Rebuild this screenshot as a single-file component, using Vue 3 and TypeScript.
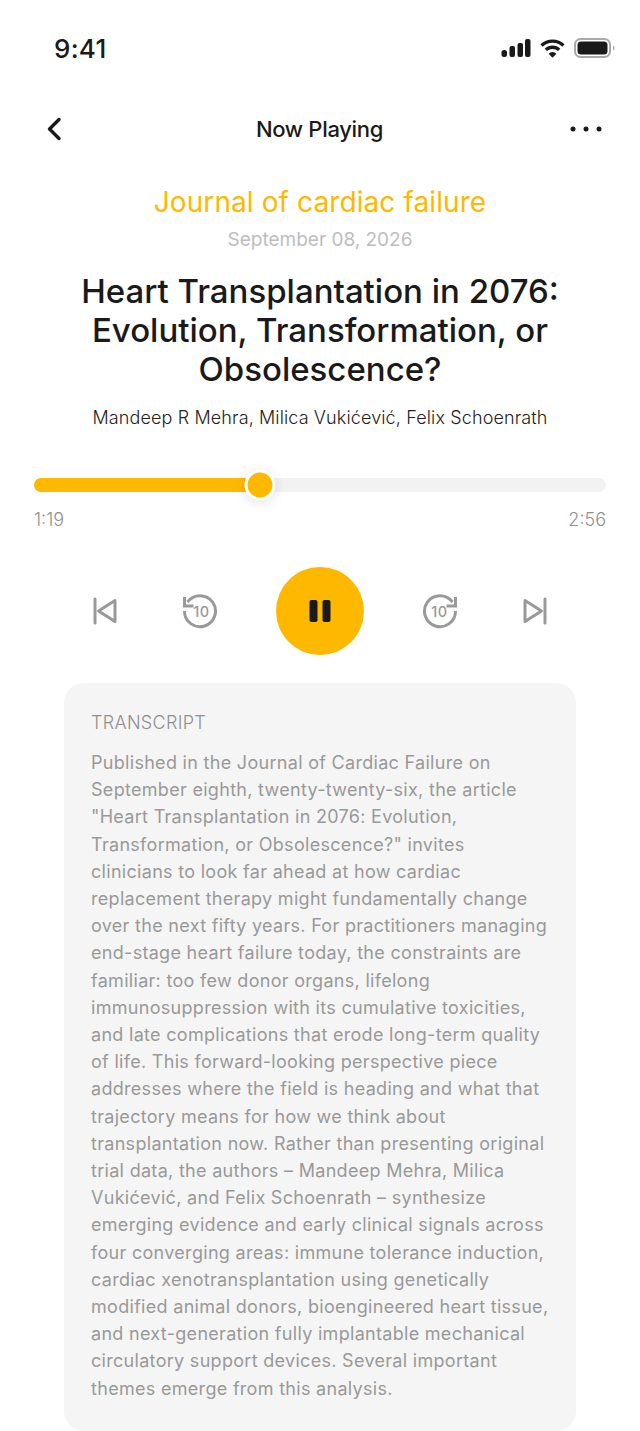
<script setup lang="ts">
const title = 'Heart Transplantation in 2076: Evolution, Transformation, or Obsolescence?'
const progress = 226 / 572
const lines = [
  'Published in the Journal of Cardiac Failure on',
  'September eighth, twenty-twenty-six, the article',
  '"Heart Transplantation in 2076: Evolution,',
  'Transformation, or Obsolescence?" invites',
  'clinicians to look far ahead at how cardiac',
  'replacement therapy might fundamentally change',
  'over the next fifty years. For practitioners managing',
  'end-stage heart failure today, the constraints are',
  'familiar: too few donor organs, lifelong',
  'immunosuppression with its cumulative toxicities,',
  'and late complications that erode long-term quality',
  'of life. This forward-looking perspective piece',
  'addresses where the field is heading and what that',
  'trajectory means for how we think about',
  'transplantation now. Rather than presenting original',
  'trial data, the authors – Mandeep Mehra, Milica',
  'Vukićević, and Felix Schoenrath – synthesize',
  'emerging evidence and early clinical signals across',
  'four converging areas: immune tolerance induction,',
  'cardiac xenotransplantation using genetically',
  'modified animal donors, bioengineered heart tissue,',
  'and next-generation fully implantable mechanical',
  'circulatory support devices. Several important',
  'themes emerge from this analysis.',
]
</script>

<template>
  <div class="screen">
    <div class="status">
      <span class="time">9:41</span>
      <div class="status-icons">
        <svg width="30" height="18" viewBox="0 0 30 18"><rect x="0.500" y="11" width="5.500" height="7" rx="2.500"/><rect x="8.500" y="7" width="5.500" height="11" rx="2"/><rect x="16.500" y="4" width="5.500" height="14" rx="2"/><rect x="24" y="0" width="5.500" height="18" rx="2"/></svg>
        <svg width="27" height="19" viewBox="0 0 27 19"><path d="M13.500 3.800c3.800 0 7.300 1.500 9.800 3.900l2.300-2.500A17.500 17.500 0 0 0 13.500 0.500 17.500 17.500 0 0 0 1.400 5.200l2.300 2.500a14.200 14.200 0 0 1 9.800-3.900zM13.500 10c2.100 0 4 .8 5.500 2.100l2.300-2.400a11.300 11.300 0 0 0-15.600 0L8 12.100c1.500-1.300 3.400-2.100 5.500-2.100zM13.500 18.800l3.900-4.100a5.600 5.600 0 0 0-7.800 0z"/></svg>
        <svg width="41" height="20" viewBox="0 0 41 20"><rect x="1" y="1" width="35" height="18" rx="5.500" fill="none" stroke="#a9a9a9" stroke-width="2"/><rect x="3.500" y="3.500" width="30" height="13" rx="3.500"/><path d="M39 7.500c1 .4 1.500 1.400 1.500 2.500s-.5 2.100-1.500 2.500z" fill="#a9a9a9"/></svg>
      </div>
    </div>

    <div class="nav">
      <svg width="20" height="24" viewBox="0 0 20 24" fill="none" stroke="#1a1a1a" stroke-width="3.400" stroke-linecap="round" stroke-linejoin="round"><path d="M14 2.500 4.500 12l9.500 9.500"/></svg>
      <span class="nav-title">Now Playing</span>
      <svg width="32" height="6" viewBox="0 0 32 6" fill="#1a1a1a"><circle cx="3" cy="3" r="2.500"/><circle cx="16" cy="3" r="2.500"/><circle cx="29" cy="3" r="2.500"/></svg>
    </div>

    <div class="head">
      <div class="journal">Journal of cardiac failure</div>
      <div class="date">September 08, 2026</div>
      <h1>{{ title }}</h1>
      <div class="authors">Mandeep R Mehra, Milica Vukićević, Felix Schoenrath</div>
    </div>

    <div class="progress">
      <div class="track">
        <div class="fill" :style="{ width: progress * 100 + '%' }"></div>
        <div class="knob" :style="{ left: progress * 100 + '%' }"></div>
      </div>
      <div class="times"><span>1:19</span><span>2:56</span></div>
    </div>

    <div class="controls">
      <svg class="skip-prev" width="24" height="28" viewBox="0 0 24 28" fill="none" stroke="#999" stroke-width="3" stroke-linejoin="round" stroke-linecap="round"><path d="M2 2v24M22 3.500 5.500 14 22 24.500z"/></svg>
      <svg width="36" height="36" viewBox="0 0 36 36" fill="none" stroke="#999" stroke-width="3" stroke-linecap="butt" stroke-linejoin="miter"><path d="M5.500 9A15.500 15.500 0 1 1 2.500 18"/><path d="M2.500 4v9h9"/><text x="19.500" y="23.500" text-anchor="middle" class="ten">10</text></svg>
      <div class="play"><svg width="22" height="22" viewBox="0 0 22 22" fill="#1a1a1a"><rect x="0.500" y="0" width="8" height="22" rx="2"/><rect x="13.500" y="0" width="8" height="22" rx="2"/></svg></div>
      <svg width="36" height="36" viewBox="0 0 36 36" fill="none" stroke="#999" stroke-width="3" stroke-linecap="butt" stroke-linejoin="miter"><path d="M30.500 9A15.500 15.500 0 1 0 33.500 18"/><path d="M33.500 4v9h-9"/><text x="17.500" y="23.500" text-anchor="middle" class="ten">10</text></svg>
      <svg class="skip-next" width="24" height="28" viewBox="0 0 24 28" fill="none" stroke="#999" stroke-width="3" stroke-linejoin="round" stroke-linecap="round"><path d="M22 2v24M2 3.500 18.500 14 2 24.500z"/></svg>
    </div>

    <div class="card">
      <div class="card-title">TRANSCRIPT</div>
      <div class="transcript">
        <div v-for="(l, i) in lines" :key="i">{{ l }}</div>
      </div>
    </div>
  </div>
</template>

<style>
body { margin: 0; background: #fff; }
</style>

<style scoped>
.screen {
  width: 640px;
  height: 1431px;
  overflow: hidden;
  background: #fff;
  font-family: "Inter", "Liberation Sans", sans-serif;
  color: #1a1a1a;
}
.status {
  display: flex;
  justify-content: space-between;
  align-items: center;
  height: 28px;
  padding: 34px 25px 0 54px;
}
.time { font-size: 26px; font-weight: 500; letter-spacing: 0.3px; }
.status-icons { display: flex; align-items: center; gap: 8px; }
.status-icons svg { fill: #1a1a1a; }
.nav {
  display: flex;
  justify-content: space-between;
  align-items: center;
  padding: 0 38px 0 45px;
  margin-top: 42px;
  height: 50px;
}
.nav-title { font-size: 22px; font-weight: 500; letter-spacing: -0.3px; margin-left: 4px; }
.head { text-align: center; padding: 0 60px; margin-top: 28px; }
.journal { font-size: 28px; color: #ffb800; line-height: 40px; letter-spacing: 0.1px; }
.date { font-size: 19px; color: #bdbdbd; line-height: 26px; margin-top: 5px; }
h1 { margin: 19px -20px 0; font-size: 33px; line-height: 39px; font-weight: 500; }
.authors { font-size: 18px; font-weight: 300; line-height: 26px; margin: 16px -30px 0; color: #222; letter-spacing: 0.12px; }
.progress { padding: 0 34px; margin-top: 47px; }
.track { position: relative; height: 14px; border-radius: 7px; background: #f2f2f2; }
.fill { height: 100%; border-radius: 7px; background: #ffb800; }
.knob {
  position: absolute; top: 50%; width: 25px; height: 25px; border-radius: 50%;
  background: #ffb800; border: 3px solid #fff; box-shadow: 0 2px 12px rgba(0,0,0,.12);
  transform: translate(-50%, -50%);
}
.times { display: flex; justify-content: space-between; margin-top: 16px; font-size: 18px; font-weight: 300; color: #8f8f8f; line-height: 24px; }
.controls { display: flex; justify-content: center; align-items: center; gap: 58px; margin-top: 35px; }
.skip-prev { margin-right: 7px; }
.skip-next { margin-left: 7px; }
.play { width: 88px; height: 88px; border-radius: 50%; background: #ffb800; display: flex; align-items: center; justify-content: center; }
.ten { font: 500 14.500px "Inter", sans-serif; letter-spacing: 0.6px; fill: #999; stroke: none; }
.card { margin: 28px 64px 0; background: #f5f5f5; border-radius: 20px; padding: 28px 27px 29px; }
.card-title { font-size: 18px; color: #8f8f8f; line-height: 24px; letter-spacing: 0.3px; font-weight: 300; }
.transcript { margin-top: 14px; font-size: 18px; line-height: 27.200px; color: #999; white-space: nowrap; letter-spacing: 0.3px; }
</style>
